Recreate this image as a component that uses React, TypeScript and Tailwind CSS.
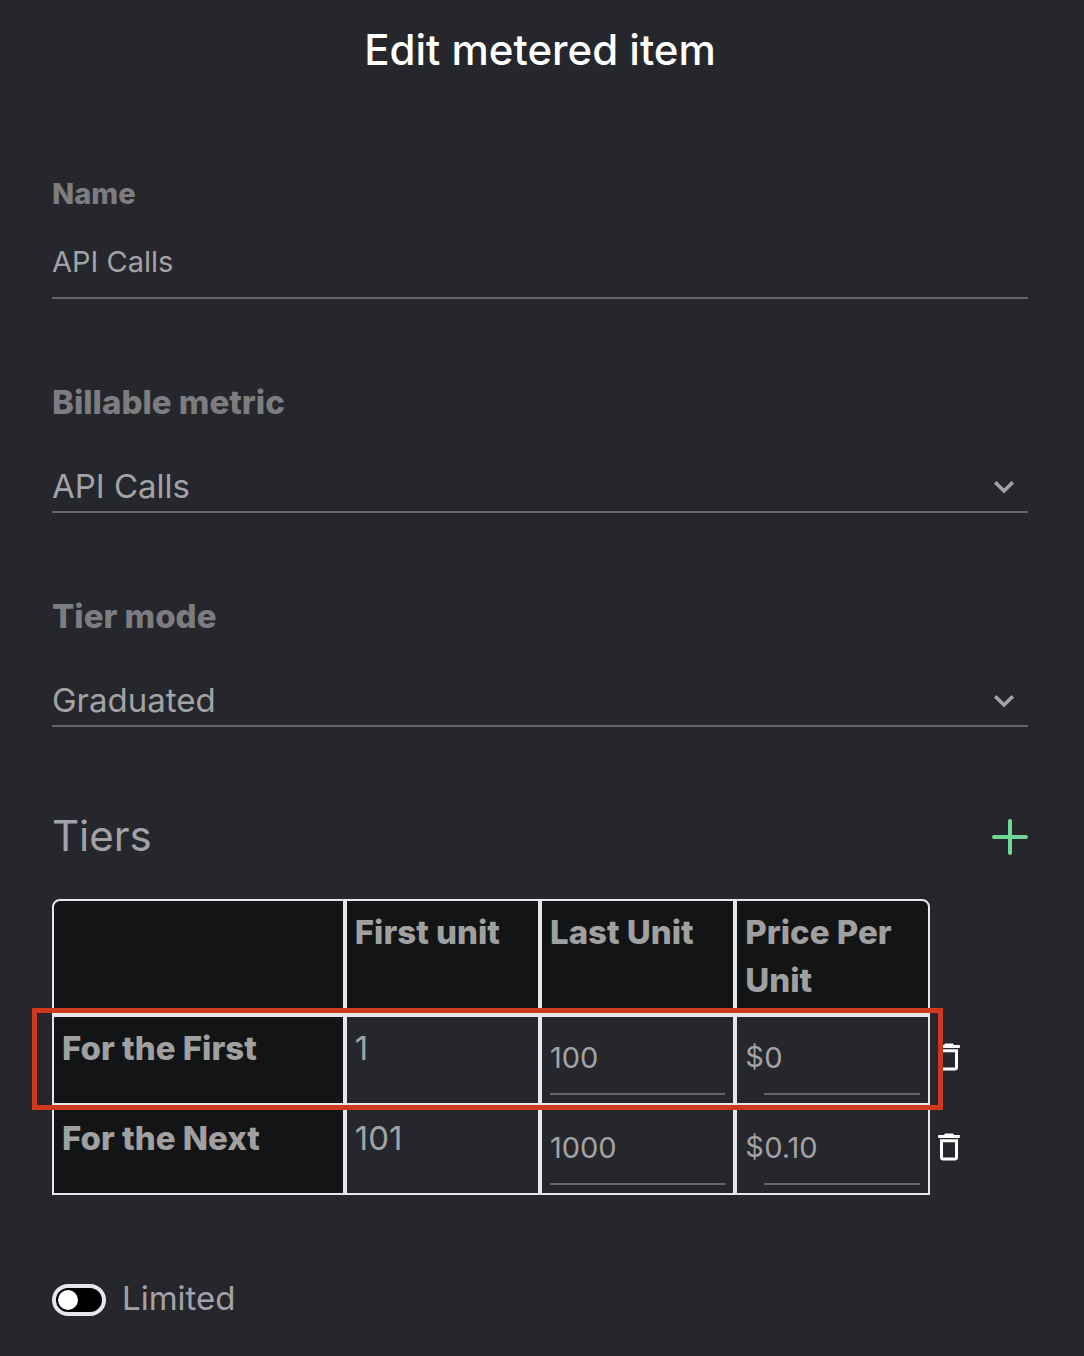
import { useState } from "react";

type Tier = { label: string; first: number; last: string; price: string };

const initialTiers: Tier[] = [
  { label: "For the First", first: 1, last: "100", price: "$0" },
  { label: "For the Next", first: 101, last: "1000", price: "$0.10" },
];

function Chevron() {
  return (
    <svg
      className="pointer-events-none absolute top-3 right-3 size-6"
      viewBox="0 0 24 24"
      fill="none"
      stroke="currentColor"
      strokeWidth="3.6"
      aria-hidden="true"
    >
      <path d="M3.2 7.2 L12 16 L20.8 7.2" />
    </svg>
  );
}

function Trash() {
  return (
    <svg className="h-7 w-[22px]" viewBox="0 0 22 28" fill="none" aria-hidden="true">
      <path d="M7 0.4 H15 L16 2 H21.8 V5 H0.2 V2 H6 Z" fill="currentColor" />
      <path d="M3.5 7.8 H18.5 V24.2 Q18.5 26 16.7 26 H5.3 Q3.5 26 3.5 24.2 Z" stroke="currentColor" strokeWidth="3" />
    </svg>
  );
}

function SelectField({ id, label, options }: { id: string; label: string; options: string[] }) {
  return (
    <div className="flex flex-col gap-9">
      <label htmlFor={id} className="text-[33px] leading-[46px] font-extrabold text-[#7d7d80]">
        {label}
      </label>
      <div className="relative mt-0.5">
        <select
          id={id}
          className="block h-[50px] w-full appearance-none border-b-2 border-[#646469] bg-transparent pb-0.5 text-[33px] leading-[46px] outline-none"
        >
          {options.map((o) => (
            <option key={o} className="bg-[#26272c]">
              {o}
            </option>
          ))}
        </select>
        <Chevron />
      </div>
    </div>
  );
}

export default function App() {
  const [tiers, setTiers] = useState(initialTiers);
  const [limited, setLimited] = useState(false);

  const update = (index: number, patch: Partial<Tier>) =>
    setTiers(tiers.map((t, i) => (i === index ? { ...t, ...patch } : t)));

  const addTier = () => {
    const next = Number(tiers[tiers.length - 1]?.last ?? 0) + 1;
    setTiers([...tiers, { label: "For the Next", first: next, last: String(next * 10), price: "$0" }]);
  };

  return (
    <main className="min-h-screen bg-[#26272c] pt-[26px] pr-14 pb-8 pl-[52px] font-['Inter',sans-serif] text-[#a3a3a5]">
      <h1 className="text-center text-[42px] leading-[48px] font-medium text-white">Edit metered item</h1>

      <form className="mt-24 flex flex-col gap-20" onSubmit={(e) => e.preventDefault()}>
        <div className="flex flex-col gap-2">
          <label htmlFor="name" className="text-[29px] leading-[48px] font-extrabold text-[#7d7d80]">
            Name
          </label>
          <input
            id="name"
            defaultValue="API Calls"
            className="h-[73px] w-full border-b-2 border-[#646469] text-[29px] outline-none"
          />
        </div>

        <SelectField id="metric" label="Billable metric" options={["API Calls"]} />
        <SelectField id="mode" label="Tier mode" options={["Graduated", "Volume"]} />

        <section className="flex flex-col gap-8">
          <div className="flex h-[60px] items-center justify-between">
            <h2 className="pb-0.5 text-[42px] leading-[58px] font-normal">Tiers</h2>
            <button type="button" aria-label="Add tier" onClick={addTier} className="text-[#6fd793]">
              <svg className="size-9" viewBox="0 0 36 36" stroke="currentColor" strokeWidth="4" strokeLinecap="round">
                <path d="M18 2 V34 M2 18 H34" />
              </svg>
            </button>
          </div>

          <div className="relative">
            <table className="w-full table-fixed border-separate border-spacing-0 text-left text-[33px] leading-[48px]">
              <colgroup>
                <col className="w-[30%]" />
                <col className="w-1/5" />
                <col className="w-1/5" />
                <col className="w-1/5" />
                <col className="w-[10%]" />
              </colgroup>
              <thead>
                <tr className="align-top text-[#a0a0a0]">
                  <td className="rounded-tl-lg border-2 border-gray-200 bg-[#131416]" />
                  <th scope="col" className="border-2 border-gray-200 bg-[#131416] px-2 pt-[7px] pb-[9px] font-extrabold">
                    First unit
                  </th>
                  <th scope="col" className="border-2 border-gray-200 bg-[#131416] px-2 pt-[7px] pb-[9px] font-extrabold">
                    Last Unit
                  </th>
                  <th
                    scope="col"
                    className="rounded-tr-lg border-2 border-gray-200 bg-[#131416] px-2 pt-[7px] pb-[9px] font-extrabold"
                  >
                    Price Per Unit
                  </th>
                  <td />
                </tr>
              </thead>
              <tbody>
                {tiers.map((tier, i) => (
                  <tr key={i} className="h-[90px] align-top">
                    <th
                      scope="row"
                      className="border-2 border-gray-200 bg-[#131416] px-2 pt-[7px] font-extrabold text-[#a0a0a0]"
                    >
                      {tier.label}
                    </th>
                    <td className="border-2 border-gray-200 px-2 pt-[7px]">{tier.first}</td>
                    <td className="border-2 border-gray-200 p-2">
                      <input
                        aria-label={`Last unit, row ${i + 1}`}
                        value={tier.last}
                        onChange={(e) => update(i, { last: e.target.value })}
                        className="block h-[70px] w-full border-b-2 border-[#646469] pb-1 text-[29px] outline-none"
                      />
                    </td>
                    <td className="border-2 border-gray-200 p-2">
                      <div className="flex text-[29px] leading-[64px]">
                        <span className="w-[19px] shrink-0">{tier.price.slice(0, 1)}</span>
                        <input
                          aria-label={`Price per unit, row ${i + 1}`}
                          value={tier.price.slice(1)}
                          onChange={(e) => update(i, { price: "$" + e.target.value })}
                          className="block h-[70px] w-full min-w-0 border-b-2 border-[#646469] pb-1 outline-none"
                        />
                      </div>
                    </td>
                    <td className="pb-1.5 pl-2 align-middle">
                      <button
                        type="button"
                        aria-label={`Delete row ${i + 1}`}
                        onClick={() => setTiers(tiers.filter((_, j) => j !== i))}
                        className="block text-white"
                      >
                        <Trash />
                      </button>
                    </td>
                  </tr>
                ))}
              </tbody>
            </table>
            <div className="pointer-events-none absolute top-[109px] right-[85px] -left-5 h-[102px] border-5 border-[#d1391f]" />
          </div>
        </section>

        <label className="flex items-center gap-4 text-[33px] leading-[46px]">
          <span className="relative mt-1 h-8 w-[54px]">
            <input
              type="checkbox"
              role="switch"
              checked={limited}
              onChange={(e) => setLimited(e.target.checked)}
              className="peer block h-8 w-[54px] appearance-none rounded-full border-4 border-gray-200 bg-black"
            />
            <span className="pointer-events-none absolute top-[6px] left-[6px] size-5 rounded-full bg-white peer-checked:left-7" />
          </span>
          Limited
        </label>
      </form>
    </main>
  );
}
